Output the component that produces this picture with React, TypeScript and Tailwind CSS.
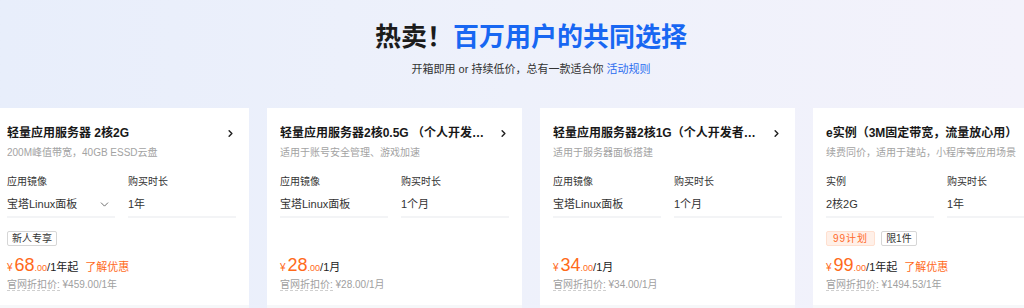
import React from "react";
import { ChevronRight, ChevronDown } from "lucide-react";

type Tag = { text: string; kind: "gray" | "orange" };
type Card = {
  title: string;
  sub: string;
  labels: [string, string];
  values: [string, string];
  dropdown?: boolean;
  tags: Tag[];
  price: string;
  unit: string;
  promo?: boolean;
  orig: string;
};

const cards: Card[] = [
  {
    title: "轻量应用服务器 2核2G",
    sub: "200M峰值带宽，40GB ESSD云盘",
    labels: ["应用镜像", "购买时长"],
    values: ["宝塔Linux面板", "1年"],
    dropdown: true,
    tags: [{ text: "新人专享", kind: "gray" }],
    price: "68",
    unit: "/1年起",
    promo: true,
    orig: "¥459.00/1年",
  },
  {
    title: "轻量应用服务器2核0.5G （个人开发者专享）",
    sub: "适用于账号安全管理、游戏加速",
    labels: ["应用镜像", "购买时长"],
    values: ["宝塔Linux面板", "1个月"],
    tags: [],
    price: "28",
    unit: "/1月",
    orig: "¥28.00/1月",
  },
  {
    title: "轻量应用服务器2核1G（个人开发者专享）",
    sub: "适用于服务器面板搭建",
    labels: ["应用镜像", "购买时长"],
    values: ["宝塔Linux面板", "1个月"],
    tags: [],
    price: "34",
    unit: "/1月",
    orig: "¥34.00/1月",
  },
  {
    title: "e实例（3M固定带宽，流量放心用）",
    sub: "续费同价，适用于建站，小程序等应用场景",
    labels: ["实例", "购买时长"],
    values: ["2核2G", "1年"],
    tags: [
      { text: "99计划", kind: "orange" },
      { text: "限1件", kind: "gray" },
    ],
    price: "99",
    unit: "/1年起",
    promo: true,
    orig: "¥1494.53/1年",
  },
];

function ProductCard({ c }: { c: Card }) {
  return (
    <div className="w-[255px] shrink-0 bg-white flex flex-col">
      <div className="px-[13px] pt-[15px] pb-[13px] flex flex-col">
        <div className="h-[20px] flex items-center gap-[4px]">
          <div className="flex-1 min-w-0 truncate text-[12px] font-bold text-[#181818] leading-[20px]">
            {c.title}
          </div>
          <ChevronRight size={11} strokeWidth={3.2} className="text-[#222] shrink-0" />
        </div>
        <div className="mt-[3px] h-[14px] text-[10px] leading-[14px] text-[#a3a3a3] truncate">
          {c.sub}
        </div>
        <div className="mt-[15px] grid grid-cols-2 gap-x-[13px]">
          {[0, 1].map((i) => (
            <div key={i} className="flex flex-col">
              <div className="h-[14px] text-[10px] leading-[14px] text-[#333]">{c.labels[i]}</div>
              <div className="mt-[4px] h-[25px] border-b-2 border-[#f3f4f6] flex items-center justify-between pb-[1px]">
                <span className="text-[11px] text-[#333] leading-[16px]">{c.values[i]}</span>
                {i === 0 && c.dropdown && (
                  <ChevronDown size={13} strokeWidth={1.4} className="text-[#444] mr-[4px]" />
                )}
              </div>
            </div>
          ))}
        </div>
        <div className="mt-[13px] h-[15px] flex items-center gap-[6px]">
          {c.tags.map((t) =>
            t.kind === "orange" ? (
              <span
                key={t.text}
                className="h-[15px] px-[6px] flex items-center text-[10px] leading-none tracking-[1px] text-[#ff6a2a] bg-[#fff0e8] border border-[#ffe0d0] rounded-[2px]"
              >
                {t.text}
              </span>
            ) : (
              <span
                key={t.text}
                className="h-[15px] px-[4px] flex items-center text-[10px] leading-none text-[#333] bg-white border border-[#d6d6d6] rounded-[2px]"
              >
                {t.text}
              </span>
            )
          )}
        </div>
        <div className="mt-[8px] h-[22px] flex items-baseline whitespace-nowrap">
          <span className="text-[10px] text-[#ff6a1a] mr-[2px]">¥</span>
          <span className="text-[18px] leading-[22px] text-[#ff6a1a]">{c.price}</span>
          <span className="text-[9px] text-[#ff6a1a]">.00</span>
          <span className="text-[11px] text-[#222]">{c.unit}</span>
          {c.promo && <span className="ml-[7px] text-[11px] text-[#ff6a1a]">了解优惠</span>}
        </div>
        <div className="mt-[2px] h-[14px] text-[10px] leading-[14px] text-[#a0a0a0] whitespace-nowrap">
          <span className="border-b border-dashed border-[#cfcfcf]">官网折扣价:</span>
          <span> {c.orig}</span>
        </div>
      </div>
      <div className="h-[40px] bg-[#f6f7f9]" />
    </div>
  );
}

export default function App() {
  return (
    <div className="w-[1024px] h-[308px] overflow-hidden bg-linear-to-r from-[#e8eefb] via-[#eef1fb] to-[#f3f2fb] font-['Liberation_Sans','Noto_Sans_CJK_SC',sans-serif]">
      <div className="w-[1074px] ml-[-6px] flex flex-col">
        <div className="pt-[19px] h-[55px] text-center text-[26px] font-bold leading-[36px] text-[#1c1c1c]">
          热卖！<span className="text-[#1867f2]">百万用户的共同选择</span>
        </div>
        <div className="mt-[6px] h-[16px] text-center text-[11px] leading-[16px] text-[#333]">
          开箱即用 or 持续低价，总有一款适合你 <span className="text-[#2b6df0]">活动规则</span>
        </div>
        <div className="mt-[31px] flex gap-[18px]">
          {cards.map((c, i) => (
            <ProductCard key={i} c={c} />
          ))}
        </div>
      </div>
    </div>
  );
}
